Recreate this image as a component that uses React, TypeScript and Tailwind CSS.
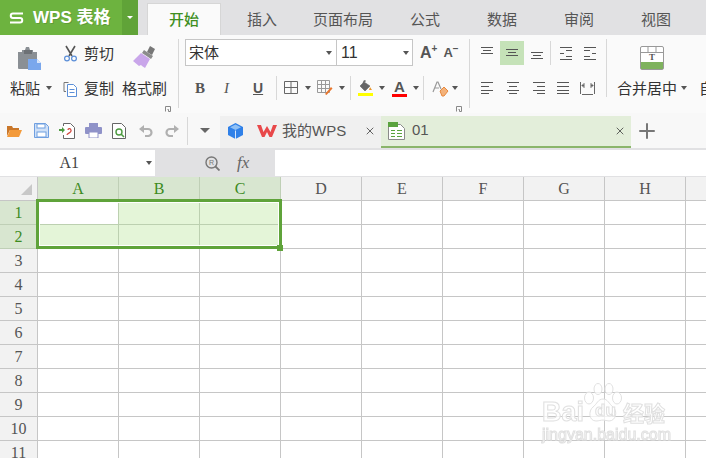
import { Plus, X } from "lucide-react"

const tabs = [
  { name: "插入", w: "w-[82px]" },
  { name: "页面布局", w: "w-[80px]" },
  { name: "公式", w: "w-[84px]" },
  { name: "数据", w: "w-[70px]" },
  { name: "审阅", w: "w-[84px]" },
  { name: "视图", w: "w-[70px]" },
]

const columns = ["A", "B", "C", "D", "E", "F", "G", "H", ""]
const rows = [1, 2, 3, 4, 5, 6, 7, 8, 9, 10, 11]

function Caret({ className = "" }: { className?: string }) {
  return <span className={`inline-block h-0 w-0 border-x-[3.5px] border-t-[4px] border-x-transparent border-t-[#555] ${className}`} />
}

function Sep({ className = "" }: { className?: string }) {
  return <div className={`w-px shrink-0 bg-[#d8d8d8] ${className}`} />
}

function Lines({ rows }: { rows: [number, number, number][] }) {
  return (
    <svg width="14" height="14" viewBox="0 0 14 14">
      {rows.map(([x1, x2, y], i) => (
        <path key={i} d={`M${x1} ${y + 0.5}H${x2}`} stroke="#555" strokeWidth="1" />
      ))}
    </svg>
  )
}

function Launcher() {
  return (
    <svg width="6" height="6" viewBox="0 0 6 6" className="absolute bottom-[1px] right-[7px]">
      <path d="M.5 5.500v-5h5v5h-2v-2h-1" fill="none" stroke="#888" />
    </svg>
  )
}

function Clipboard() {
  return (
    <div className="relative flex h-[78px] w-[178px] shrink-0">
      <div className="flex w-[58px] shrink-0 flex-col items-start pl-[10px] pt-[12px]">
        <svg width="26" height="24" viewBox="0 0 26 24" className="ml-[7px]">
          <path d="M1 5h4V3h3l1-3h3l1 3h3v2h4v7H14v10H2a1 1 0 0 1-1-1z" fill="#8a8f94" />
          <rect x="7" y="3" width="8" height="4" fill="#6d7175" />
          <path d="M11 12h9l4 4v7H11z" fill="#7aa7ec" />
          <path d="M20 12l4 4h-4z" fill="#d6e4fa" />
        </svg>
        <div className="mt-[7px] flex items-center text-[15px] leading-5 text-[#333]">
          粘贴<Caret className="ml-[6px]" />
        </div>
      </div>
      <div className="flex w-[54px] shrink-0 flex-col pl-[5px] pt-[8px]">
        <div className="flex h-[20px] items-center gap-[6px] whitespace-nowrap text-[15px] text-[#333]">
          <svg width="15" height="17" viewBox="0 0 15 17" className="shrink-0">
            <path d="M3 1l6 10M12 1L6 11" stroke="#555" strokeWidth="1.600" />
            <circle cx="4" cy="13.500" r="2.400" fill="none" stroke="#5b8fd8" strokeWidth="1.200" />
            <circle cx="11" cy="13.500" r="2.400" fill="none" stroke="#5b8fd8" strokeWidth="1.200" />
          </svg>
          剪切
        </div>
        <div className="mt-[15px] flex h-[20px] items-center gap-[6px] whitespace-nowrap text-[15px] text-[#333]">
          <svg width="15" height="17" viewBox="0 0 15 17" className="shrink-0">
            <path d="M5.500 2.500H1v9h2" fill="none" stroke="#777" />
            <path d="M4.500 4.500h6l3 3v9h-9z" fill="#fff" stroke="#5b8fd8" />
            <path d="M6.500 9.500h5M6.500 12.500h5" stroke="#5b8fd8" />
          </svg>
          复制
        </div>
      </div>
      <div className="flex flex-col items-start pl-[10px] pt-[10px]">
        <svg width="24" height="24" viewBox="0 0 24 24" className="ml-[10px]">
          <path d="M15 7l3-6 5 3-3 6z" fill="#777" />
          <path d="M12 5l9 6-2 3-9-6z" fill="#8b8b8b" />
          <path d="M9 8l9 6-5 9-3-2-1-1-2 1-6-5 3-3z" fill="#c9a6ea" />
        </svg>
        <div className="mt-[9px] whitespace-nowrap text-[15px] leading-5 text-[#333]">格式刷</div>
      </div>
      <Launcher />
    </div>
  )
}

function FontGroup() {
  return (
    <div className="relative ml-[6px] h-[78px] w-[284px] shrink-0 pt-[4px]">
      <div className="flex items-center">
        <div className="flex h-[27px] w-[228px] border border-[#c6c6c6] bg-white text-[15px] text-[#333]">
          <div className="flex w-[151px] items-center justify-between border-r border-[#c6c6c6] pl-[3px] pr-[4px]">
            宋体<Caret />
          </div>
          <div className="flex flex-1 items-center justify-between pl-[4px] pr-[3px] font-['Liberation_Sans',sans-serif] text-[16px]">
            11<Caret />
          </div>
        </div>
        <div className="ml-[7px] flex items-start font-['Liberation_Sans',sans-serif] font-bold text-[#555]">
          <span className="text-[16px] leading-5">A</span>
          <span className="text-[10px] leading-3">+</span>
          <span className="ml-[6px] text-[13px] leading-5">A</span>
          <span className="text-[10px] leading-3">−</span>
        </div>
      </div>
      <div className="mt-[7px] flex h-[30px] items-center">
        <span className="ml-[10px] w-[29px] font-['Liberation_Serif',serif] text-[15px] font-bold text-[#555]">B</span>
        <span className="w-[29px] font-['Liberation_Serif',serif] text-[15px] italic text-[#555]">I</span>
        <span className="w-[23px] font-['Liberation_Sans',sans-serif] text-[14px] font-bold text-[#555] underline">U</span>
        <Sep className="h-[24px]" />
        <svg width="14" height="14" viewBox="0 0 14 14" className="ml-[7px]">
          <path d="M.5.5h13v12H.5zM7 .5v12M.5 6.500h13" fill="none" stroke="#666" />
        </svg>
        <Caret className="ml-[7px] mr-px" />
        <svg width="16" height="16" viewBox="0 0 16 16" className="ml-[5px]">
          <path d="M.5.5h12v12H.5zM4.500.5v12M8.500.5v12M.5 4.500h12M.5 8.500h12" fill="none" stroke="#999" />
          <path d="M8 14l6-7 1.500 1.500-6 6.500z" fill="#e8772e" />
        </svg>
        <Caret className="ml-[6px] mr-px" />
        <Sep className="ml-[4px] h-[24px]" />
        <div className="ml-[6px] flex w-[16px] flex-col items-center">
          <svg width="15" height="12" viewBox="0 0 15 12">
            <path d="M6 2l6 4-5 5-5-5zM5 3l1-2.500 2 .5" fill="#666" stroke="#666" strokeWidth=".6" />
            <path d="M12 7l2 3h-3z" fill="#e8962e" />
          </svg>
          <div className="mt-px h-[3px] w-[15px] bg-[#ffff00]" />
        </div>
        <Caret className="ml-[6px] mr-px" />
        <div className="ml-[6px] flex w-[15px] flex-col items-center">
          <span className="font-['Liberation_Sans',sans-serif] text-[15px] leading-[13px] font-bold text-[#555]">A</span>
          <div className="mt-px h-[3px] w-[15px] bg-[#ff0000]" />
        </div>
        <Caret className="ml-[6px] mr-px" />
        <Sep className="ml-[3px] h-[24px]" />
        <svg width="17" height="17" viewBox="0 0 17 17" className="ml-[8px]">
          <path d="M1 12L5 2h1l3 7M3 8h4" fill="none" stroke="#999" strokeWidth="1.200" />
          <path d="M8 11l4-4 4 4-4 5h-2z" fill="#f3b27a" stroke="#e8883c" />
        </svg>
        <Caret className="ml-[3px]" />
      </div>
      <Launcher />
    </div>
  )
}

function AlignGroup() {
  return (
    <div className="relative flex h-[78px] w-[137px] shrink-0 flex-col pl-[10px] pt-[6px]">
      <div className="flex h-[24px] items-center">
        <div className="flex w-[20px]"><Lines rows={[[1, 13, 1], [3, 11, 4], [1, 13, 7]]} /></div>
        <div className="flex h-[24px] w-[24px] items-center justify-center bg-[#c5e2b8]"><Lines rows={[[1, 13, 3], [3, 11, 6], [1, 13, 9]]} /></div>
        <div className="flex w-[26px] justify-center"><Lines rows={[[1, 13, 6], [3, 11, 9], [1, 13, 12]]} /></div>
        <Sep className="h-[24px]" />
        <div className="ml-[8px] flex w-[24px]"><Lines rows={[[1, 13, 1], [7, 13, 4], [1, 5, 7], [7, 13, 10], [1, 13, 13]]} /></div>
        <Lines rows={[[1, 13, 1], [1, 7, 4], [9, 13, 7], [1, 7, 10], [1, 13, 13]]} />
      </div>
      <div className="mt-[11px] flex h-[24px] items-center">
        <div className="w-[26px]"><Lines rows={[[1, 13, 1], [1, 9, 5], [1, 13, 9], [1, 9, 12]]} /></div>
        <div className="w-[26px]"><Lines rows={[[1, 13, 1], [3, 11, 5], [1, 13, 9], [3, 11, 12]]} /></div>
        <div className="w-[24px]"><Lines rows={[[1, 13, 1], [5, 13, 5], [1, 13, 9], [5, 13, 12]]} /></div>
        <div className="w-[24px]"><Lines rows={[[1, 13, 1], [1, 13, 5], [1, 13, 9], [1, 13, 12]]} /></div>
        <svg width="15" height="14" viewBox="0 0 15 14">
          <path d="M.5 1v12M14.500 1v12M2 13.500h11M4 4.500H2m11 0h-2M2 4.500l2-2v4zM13 4.500l-2-2v4z" fill="none" stroke="#666" />
        </svg>
      </div>
      <Sep className="absolute right-0 top-[4px] h-[58px]" />
    </div>
  )
}

function MergeGroup() {
  return (
    <div className="flex h-[78px] flex-1 flex-col overflow-hidden pl-[10px] pt-[11px]">
      <svg width="24" height="24" viewBox="0 0 24 24" className="ml-[23px]">
        <rect x=".5" y=".5" width="23" height="23" rx="1.500" fill="#fff" stroke="#999" />
        <path d="M8 .5v6M16 .5v6M.5 6.500h23" stroke="#999" />
        <rect x="1" y="16" width="22" height="7" fill="#7fb25e" />
        <text x="12" y="14" textAnchor="middle" fontFamily="Liberation Serif" fontWeight="bold" fontSize="9" fill="#555">T</text>
      </svg>
      <div className="mt-[8px] flex items-center whitespace-nowrap text-[15px] leading-5 text-[#333]">
        合并居中<Caret className="ml-[4px]" /><span className="ml-[12px]">自</span>
      </div>
    </div>
  )
}

function QuickBar() {
  return (
    <div className="flex h-[35px] items-center bg-[#f8f8f8] pl-[7px]">
      <svg width="15" height="12" viewBox="0 0 15 12"><path d="M0 1h5l1 2h6v2H3L0 11z" fill="#c9772a" /><path d="M3 5h12l-3 7H0z" fill="#f39a3a" /></svg>
      <svg width="15" height="15" viewBox="0 0 15 15" className="ml-[12px]"><path d="M.5.5h11l3 3v11H.5z" fill="#cfe0f7" stroke="#6f9fe0" /><rect x="3" y="1" width="8" height="4" fill="#fff" stroke="#6f9fe0" /><rect x="3" y="9" width="9" height="5" fill="#fff" stroke="#6f9fe0" /></svg>
      <svg width="16" height="16" viewBox="0 0 16 16" className="ml-[10px]"><path d="M4.500 3V.5h7l4 4v11h-11V12" fill="#fff" stroke="#666" /><path d="M0 6h3V4l3 3-3 3V8H0z" fill="#4d9a40" /><path d="M8 12c0-2 5-2 4-5-.5-2-3-1.500-3 0" fill="none" stroke="#d0453c" strokeWidth="1.200" /></svg>
      <svg width="17" height="15" viewBox="0 0 17 15" className="ml-[10px]"><rect x="4" y="0" width="9" height="4" fill="#8f92c8" /><rect x="0" y="4" width="17" height="7" rx="1" fill="#8f92c8" /><rect x="4" y="9" width="9" height="6" fill="#fff" stroke="#8f92c8" /></svg>
      <svg width="14" height="16" viewBox="0 0 14 16" className="ml-[10px]"><path d="M.5.5h9l4 4v11H.5z" fill="#fff" stroke="#666" /><circle cx="7" cy="9" r="3" fill="none" stroke="#4d9a40" strokeWidth="1.400" /><path d="M9 11l3 3" stroke="#4d9a40" strokeWidth="1.600" /></svg>
      <svg width="14" height="13" viewBox="0 0 14 13" className="ml-[13px]"><path d="M2 5h7a3.500 3.500 0 0 1 0 7H6" fill="none" stroke="#b0b0b0" strokeWidth="2.200" /><path d="M5 1v8L0 5z" fill="#b0b0b0" /></svg>
      <svg width="14" height="13" viewBox="0 0 14 13" className="ml-[12px]"><path d="M12 5H5a3.500 3.500 0 0 0 0 7h3" fill="none" stroke="#b0b0b0" strokeWidth="2.200" /><path d="M9 1v8l5-4z" fill="#b0b0b0" /></svg>
      <Sep className="ml-[8px] h-[28px]" />
      <span className="ml-[12px] inline-block h-0 w-0 border-x-[5px] border-t-[5px] border-x-transparent border-t-[#666]" />
      <div className="ml-[10px] flex h-[32px] w-[161px] items-center self-end bg-[#f0f0f0] pl-[8px] pb-[2px]">
        <svg width="15" height="16" viewBox="0 0 15 16" className="shrink-0"><path d="M7.500 0L15 4v8l-7.500 4L0 12V4z" fill="#2f80e8" /><path d="M7.500 1.500L13 4.300 7.500 7 2 4.300z" fill="#8fc0f5" /><path d="M7.500 7.500V16" stroke="#fff" strokeWidth=".8" /></svg>
        <svg width="20" height="14" viewBox="0 0 20 14" className="ml-[14px] shrink-0"><path d="M0 1h4l2.500 7L10 2l3.500 6L16 1h4l-5 12h-2.500L10 8l-2.500 5H5z" fill="#e8484a" /></svg>
        <span className="ml-[5px] whitespace-nowrap text-[15px] text-[#555]">我的<span className="font-['Liberation_Sans',sans-serif]">WPS</span></span>
        <X className="ml-[18px] h-[12px] w-[12px] shrink-0 text-[#333]" strokeWidth={1.500} />
      </div>
      <div className="flex h-[32px] w-[250px] items-center self-end border-b-2 border-[#8ab56a] bg-[#e3eeda] pl-[7px] pb-[1px]">
        <svg width="17" height="18" viewBox="0 0 17 18"><path d="M.5 2.500h12l4 4v11H.5z" fill="#fff" stroke="#8a8a8a" /><rect x="0" y="0" width="10" height="5" fill="#5aa33e" /><path d="M3 8.500h4M3 11.500h4M3 14.500h4M9 8.500h5M9 11.500h5M9 14.500h5" stroke="#5aa33e" strokeWidth="1.200" /></svg>
        <span className="ml-[7px] font-['Liberation_Sans',sans-serif] text-[15px] text-[#555]">01</span>
        <X className="ml-auto mr-[5px] h-[12px] w-[12px] text-[#333]" strokeWidth={1.500} />
      </div>
      <Plus className="ml-[4px] h-[24px] w-[24px] text-[#777]" strokeWidth={2} />
    </div>
  )
}

function Row({ n }: { n: number }) {
  const selected = n <= 2
  return (
    <>
      <div className={`flex items-center justify-center border-b border-r ${selected ? "border-[#bfcfb6] bg-[#d8e6d0] text-[#3d8b1f]" : "border-[#c6c6c6] bg-[#f2f2f2] text-[#555]"}`}>
        {n}
      </div>
      {columns.map((c, i) => (
        <div
          key={i}
          className={`border-b border-r ${selected && i < 3 ? "border-[#bcd0b0]" : "border-[#c6c6c6]"} ${selected && i < 3 && !(n === 1 && i === 0) ? "bg-[#e4f5d8]" : "bg-white"}`}
        />
      ))}
    </>
  )
}

function Watermark() {
  const outline = "[-webkit-text-stroke:1px_#e0e0e0]"
  return (
    <div className="absolute left-[540px] top-[204px] h-[70px] w-[130px] font-['Liberation_Sans',sans-serif] text-[rgba(255,255,255,0.8)] blur-[0.4px]">
      <svg width="40" height="42" viewBox="0 0 40 42" className="absolute left-[43px] top-[2px]">
        <g fill="rgba(255,255,255,0.75)" stroke="#e0e0e0">
          <ellipse cx="6" cy="15" rx="4.500" ry="6" />
          <ellipse cx="15" cy="6" rx="4" ry="5.500" />
          <ellipse cx="26" cy="6" rx="4" ry="5.500" />
          <ellipse cx="34" cy="15" rx="4.500" ry="6" />
          <path d="M20 16c5 0 6 5 10 8 5 4 3 14-4 14-2 0-4-1-6-1s-4 1-7 1c-7 0-8-10-3-14 4-3 5-8 10-8z" />
        </g>
      </svg>
      <span className={`absolute left-[2px] top-[17px] text-[27px] leading-7 font-bold ${outline}`}>Bai</span>
      <span className={`absolute left-[55px] top-[20px] text-[17px] leading-5 font-bold ${outline}`}>du</span>
      <span className={`absolute left-[83px] top-[19px] font-['Noto_Sans_CJK_SC',sans-serif] text-[21px] leading-6 font-bold ${outline}`}>经验</span>
      <span className={`absolute left-[2px] top-[44px] whitespace-nowrap text-[16px] leading-5 ${outline}`}>jingyan.baidu.com</span>
    </div>
  )
}

function Grid() {
  return (
    <div className="relative h-[281px] overflow-hidden bg-white font-['Liberation_Serif',serif] text-[16px]">
      <div className="grid grid-cols-[38px_repeat(8,81px)_21px] grid-rows-[24px] auto-rows-[24px]">
        <div className="relative border-b border-r border-[#c6c6c6] bg-[#f2f2f2]">
          <div className="absolute bottom-[5px] right-[5px] h-0 w-0 border-b-[11px] border-l-[11px] border-b-[#c8c8c8] border-l-transparent" />
        </div>
        {columns.map((c, i) => (
          <div
            key={i}
            className={`flex items-center justify-center border-b border-r ${i < 3 ? "border-[#bfcfb6] bg-[#d8e6d0] text-[#3d8b1f]" : "border-[#c6c6c6] bg-[#f2f2f2] text-[#555]"}`}
          >
            {c}
          </div>
        ))}
        {rows.map((r) => (
          <Row key={r} n={r} />
        ))}
      </div>
      {/* selection box over the cells */}
      <div className="absolute left-[36px] top-[22px] h-[50px] w-[246px] border-[3px] border-[#5fa33a] shadow-[inset_0_0_0_1px_#fff]" />
      <div className="absolute left-[277px] top-[68px] h-[6px] w-[6px] bg-[#5fa33a]" />
      <Watermark />
    </div>
  )
}

export default function App() {
  return (
    <div className="h-[458px] w-[706px] overflow-hidden bg-[#e1e1e3] font-['Noto_Sans_CJK_SC','Noto_Sans',sans-serif]">
      <div className="flex h-[35px] items-end bg-[#e1e1e3]">
        <div className="flex h-[35px] w-[122px] items-center whitespace-nowrap bg-[#6db33f] pl-[9px] font-['Liberation_Sans','Noto_Sans_CJK_SC',sans-serif] text-[17px] font-bold text-white [text-shadow:1px_1px_0_rgba(0,0,0,0.15)]">
          <svg width="15" height="12" viewBox="0 0 15 12" className="mr-[9px] shrink-0">
            <path d="M14 1.500H4a2 2 0 0 0 0 4.500h7a2 2 0 0 1 0 4.500H1" fill="none" stroke="#fff" strokeWidth="2" />
          </svg>
          WPS 表格
        </div>
        <div className="flex h-[35px] w-[16px] items-center justify-center bg-[#60a338]">
          <span className="h-0 w-0 border-x-[3.5px] border-t-[3.5px] border-x-transparent border-t-white" />
        </div>
        <div className="ml-[9px] flex h-[32px] w-[74px] items-center justify-center border-x border-t border-[#d6d6d6] bg-[#fafafa] text-[15px] font-medium text-[#3f8f1f]">
          开始
        </div>
        {tabs.map((t) => (
          <div key={t.name} className={`flex h-[32px] items-center justify-center whitespace-nowrap text-[15px] text-[#555] ${t.w}`}>
            {t.name}
          </div>
        ))}
      </div>
      <div className="flex h-[78px] bg-[#fafafa]">
        <Clipboard />
        <Sep className="mt-[4px] h-[69px]" />
        <FontGroup />
        <Sep className="mt-[4px] h-[69px]" />
        <AlignGroup />
        <MergeGroup />
      </div>
      <QuickBar />
      <div className="flex h-[29px] items-start pt-[2px]">
        <div className="flex h-[26px] w-[155px] items-center justify-end bg-white pr-[3px]">
          <span className="mr-[67px] font-['Liberation_Serif',serif] text-[16px] text-[#444]">A1</span>
          <Caret />
        </div>
        <div className="flex h-[26px] w-[120px] items-center pl-[50px]">
          <svg width="15" height="15" viewBox="0 0 15 15">
            <circle cx="6.500" cy="6.500" r="5.500" fill="none" stroke="#777" strokeWidth="1.400" />
            <path d="M10.500 10.500l4 4" stroke="#777" strokeWidth="1.800" />
            <text x="6.500" y="9" textAnchor="middle" fontSize="7" fontFamily="Liberation Sans" fill="#777">R</text>
          </svg>
          <span className="ml-[17px] font-['Liberation_Serif',serif] text-[17px] italic text-[#666]">fx</span>
        </div>
        <div className="h-[26px] flex-1 bg-white" />
      </div>
      <Grid />
    </div>
  )
}
